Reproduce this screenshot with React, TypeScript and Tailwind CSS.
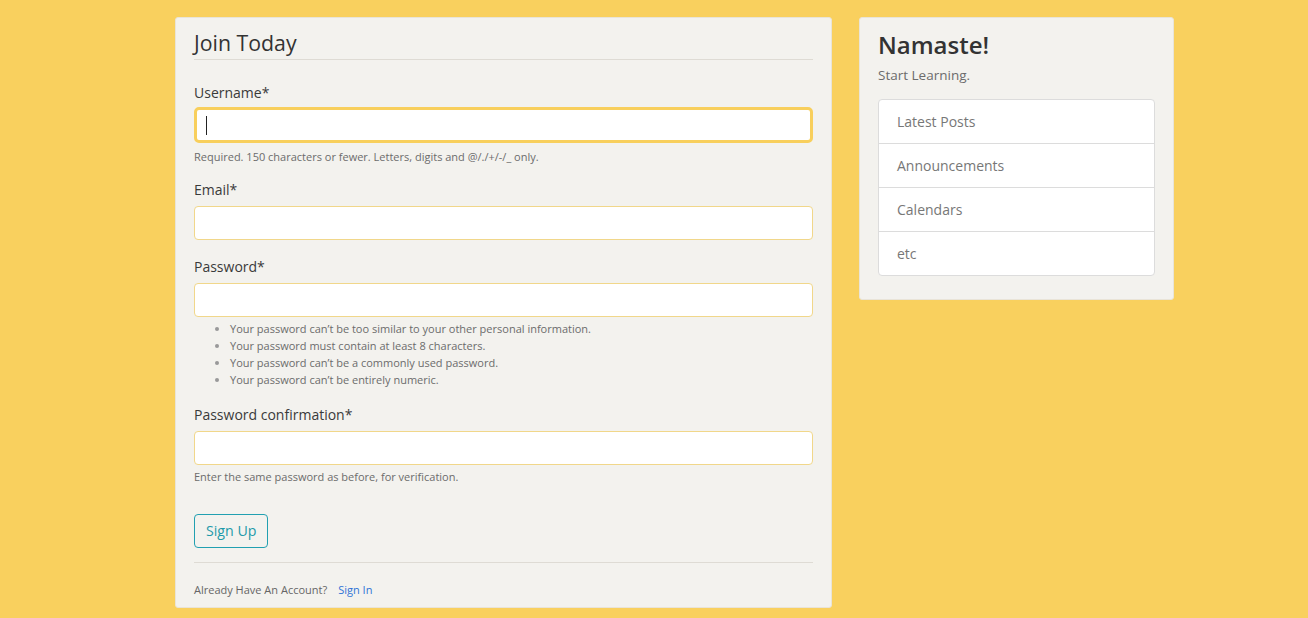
const font = { fontFamily: '"Open Sans", "Noto Sans", sans-serif' };

const passwordRules = [
  "Your password can’t be too similar to your other personal information.",
  "Your password must contain at least 8 characters.",
  "Your password can’t be a commonly used password.",
  "Your password can’t be entirely numeric.",
];

const links = ["Latest Posts", "Announcements", "Calendars", "etc"];

const Field = ({ label, focused }: { label: string; focused?: boolean }) => (
  <div>
    <label className="block text-[14px] leading-[21px] text-[#3a3a3a]">{label}</label>
    <div
      className={
        focused
          ? "mt-[4px] flex h-[36px] items-center rounded-[5px] border-[3px] border-[#f8cf5c] bg-white px-[9px]"
          : "mt-[6px] h-[34px] rounded-[4px] border border-[#f1d78a] bg-white"
      }
    >
      {focused && <span className="h-[19px] w-px bg-[#222]" />}
    </div>
  </div>
);

export default function App() {
  return (
    <div className="min-h-[618px] w-full bg-[#f9d05e]" style={font}>
      <div className="flex gap-[27px] pl-[175px] pt-[17px]">
        <div className="w-[657px] rounded-[3px] border border-[#e9e4d8] bg-[#f3f2ee] px-[18px] pb-[9px] pt-[9px]">
          <div className="border-b border-[#dedbd4] pb-[1px] text-[21.3px] leading-[31px] text-[#333]">
            Join Today
          </div>

          <div className="mt-[22px]">
            <Field label="Username*" focused />
            <p className="mt-[5px] text-[11px] leading-[17px] text-[#6c6c6c]">
              Required. 150 characters or fewer. Letters, digits and @/./+/-/_ only.
            </p>
          </div>

          <div className="mt-[14px]">
            <Field label="Email*" />
          </div>

          <div className="mt-[16px]">
            <Field label="Password*" />
            <ul className="mt-[3px] list-disc pl-[36px] text-[11px] leading-[17px] text-[#6c6c6c] marker:text-[#999]">
              {passwordRules.map((r) => (
                <li key={r}>{r}</li>
              ))}
            </ul>
          </div>

          <div className="mt-[16px]">
            <Field label="Password confirmation*" />
            <p className="mt-[3px] text-[11px] leading-[17px] text-[#6c6c6c]">
              Enter the same password as before, for verification.
            </p>
          </div>

          <div className="mt-[29px] border-b border-[#dedbd4] pb-[14px]">
            <button className="h-[34px] rounded-[4px] border border-[#21a0b1] px-[11px] text-[14.2px] text-[#1e9aaa]">
              Sign Up
            </button>
          </div>

          <div className="pt-[18px] text-[11px] leading-[17px] text-[#666]">
            Already Have An Account?
            <a className="ml-[11px] text-[#2f74d6]">Sign In</a>
          </div>
        </div>

        <div className="self-start w-[315px] rounded-[3px] border border-[#e9e4d8] bg-[#f3f2ee] px-[18px] pb-[23px] pt-[10px]">
          <h3 className="text-[24px] font-semibold leading-[34px] text-[#333]">Namaste!</h3>
          <p className="mt-[5px] text-[13.5px] leading-[16px] text-[#6c6c6c]">Start Learning.</p>
          <ul className="mt-[16px] overflow-hidden rounded-[4px] border border-[#dcdcdc] bg-white">
            {links.map((l, i) => (
              <li
                key={l}
                className={
                  "px-[18px] text-[14px] leading-[43px] text-[#777] " +
                  (i > 0 ? "border-t border-[#dcdcdc]" : "")
                }
              >
                {l}
              </li>
            ))}
          </ul>
        </div>
      </div>
    </div>
  );
}
